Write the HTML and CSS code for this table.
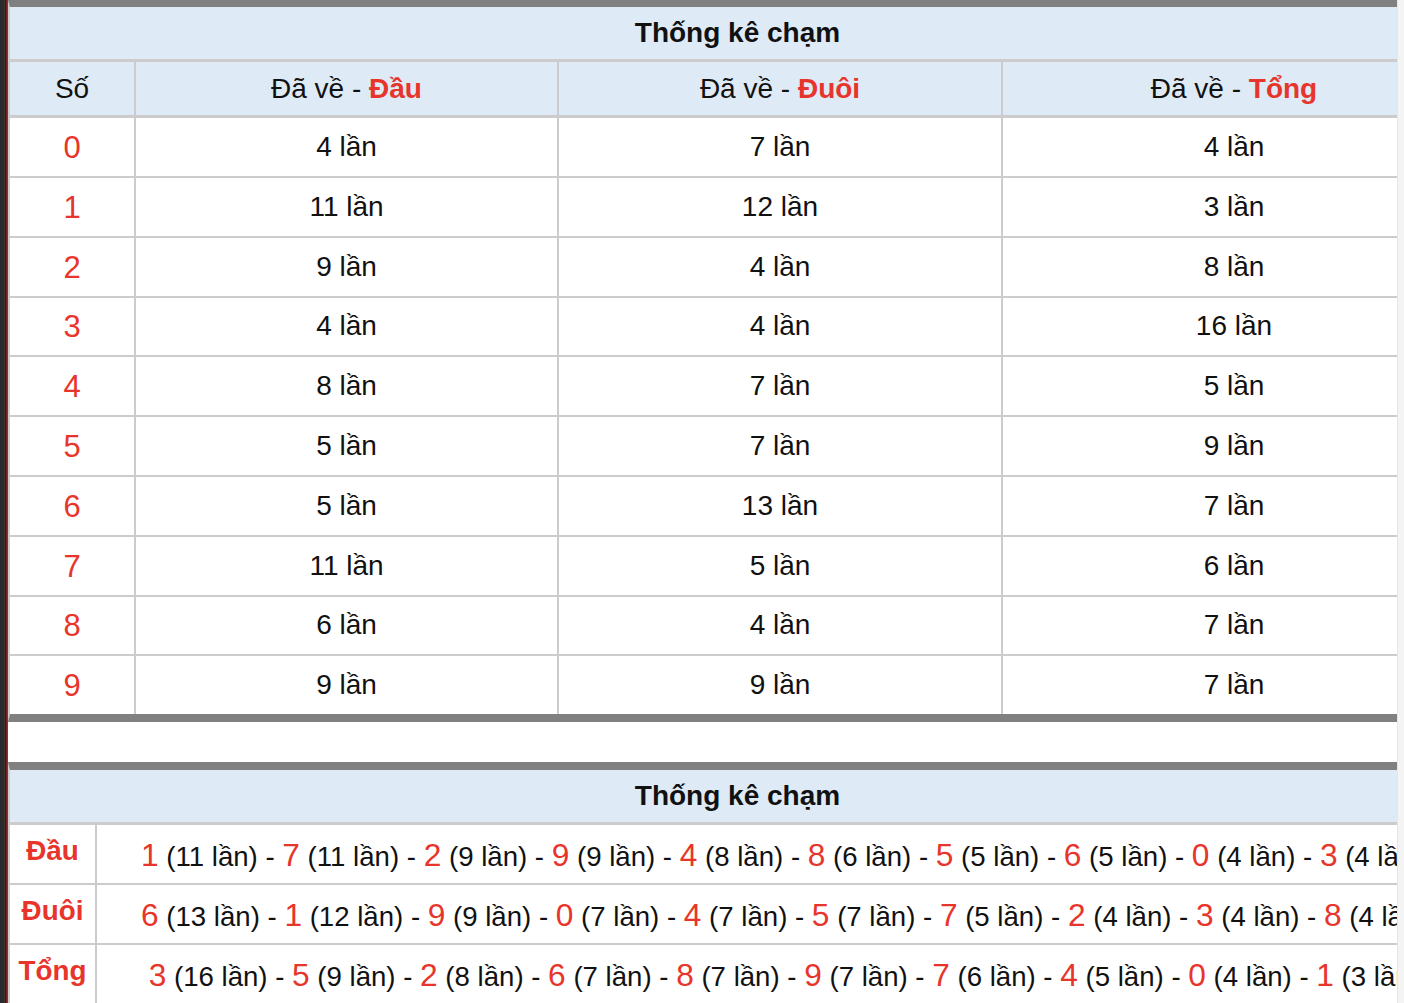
FILE: index.html
```html
<!DOCTYPE html>
<html lang="vi">
<head>
<meta charset="utf-8">
<title>Thống kê chạm</title>
<link rel="stylesheet" href="styles.css">
</head>
<body>
<div class="screen">
  <div class="edge"></div>
  <div class="main">
    <table class="stat t1">
      <colgroup>
        <col class="c1"><col class="c2"><col class="c3"><col class="c4">
      </colgroup>
      <tr class="title-row"><th colspan="4">Thống kê chạm</th></tr>
      <tr class="head-row">
        <th>Số</th>
        <th>Đã về - <b class="red">Đầu</b></th>
        <th>Đã về - <b class="red">Đuôi</b></th>
        <th>Đã về - <b class="red">Tổng</b></th>
      </tr>
      <tr class="first"><td class="num">0</td><td>4 lần</td><td>7 lần</td><td>4 lần</td></tr>
      <tr><td class="num">1</td><td>11 lần</td><td>12 lần</td><td>3 lần</td></tr>
      <tr><td class="num">2</td><td>9 lần</td><td>4 lần</td><td>8 lần</td></tr>
      <tr><td class="num">3</td><td>4 lần</td><td>4 lần</td><td>16 lần</td></tr>
      <tr><td class="num">4</td><td>8 lần</td><td>7 lần</td><td>5 lần</td></tr>
      <tr><td class="num">5</td><td>5 lần</td><td>7 lần</td><td>9 lần</td></tr>
      <tr><td class="num">6</td><td>5 lần</td><td>13 lần</td><td>7 lần</td></tr>
      <tr><td class="num">7</td><td>11 lần</td><td>5 lần</td><td>6 lần</td></tr>
      <tr><td class="num">8</td><td>6 lần</td><td>4 lần</td><td>7 lần</td></tr>
      <tr><td class="num">9</td><td>9 lần</td><td>9 lần</td><td>7 lần</td></tr>
    </table>

    <table class="stat t2">
      <colgroup>
        <col class="s1"><col class="s2">
      </colgroup>
      <tr class="title-row"><th colspan="2">Thống kê chạm</th></tr>
      <tr class="first">
        <th class="label">Đầu</th>
        <td class="line"><span class="n">1</span> (11 lần) - <span class="n">7</span> (11 lần) - <span class="n">2</span> (9 lần) - <span class="n">9</span> (9 lần) - <span class="n">4</span> (8 lần) - <span class="n">8</span> (6 lần) - <span class="n">5</span> (5 lần) - <span class="n">6</span> (5 lần) - <span class="n">0</span> (4 lần) - <span class="n">3</span> (4 lần)</td>
      </tr>
      <tr>
        <th class="label">Đuôi</th>
        <td class="line"><span class="n">6</span> (13 lần) - <span class="n">1</span> (12 lần) - <span class="n">9</span> (9 lần) - <span class="n">0</span> (7 lần) - <span class="n">4</span> (7 lần) - <span class="n">5</span> (7 lần) - <span class="n">7</span> (5 lần) - <span class="n">2</span> (4 lần) - <span class="n">3</span> (4 lần) - <span class="n">8</span> (4 lần)</td>
      </tr>
      <tr>
        <th class="label">Tổng</th>
        <td class="line">&nbsp;<span class="n">3</span> (16 lần) - <span class="n">5</span> (9 lần) - <span class="n">2</span> (8 lần) - <span class="n">6</span> (7 lần) - <span class="n">8</span> (7 lần) - <span class="n">9</span> (7 lần) - <span class="n">7</span> (6 lần) - <span class="n">4</span> (5 lần) - <span class="n">0</span> (4 lần) - <span class="n">1</span> (3 lần)</td>
      </tr>
    </table>
  </div>
  <div class="scroll"></div>
</div>
</body>
</html>
```

FILE: styles.css
```css
html, body {
  margin: 0;
  padding: 0;
  background: #ffffff;
}

body {
  font-family: "Liberation Sans", Arial, sans-serif;
  color: #111111;
}

.screen {
  display: flex;
  height: 1003px;
  overflow: hidden;
}

.edge {
  flex: 0 0 8px;
  background: linear-gradient(to right,
    #2b2b2b 0, #2b2b2b 4px,
    #3a3a3a 4px, #3a3a3a 5px,
    #1e1e1e 5px, #1e1e1e 6px,
    #7c2424 6px, #7c2424 7px,
    #4a4a4a 7px, #4a4a4a 8px);
}

.main {
  flex: 0 0 1389px;
  overflow: hidden;
}

.scroll {
  flex: 0 0 7px;
  box-sizing: border-box;
  background: #f4f4f4;
  border-left: 1px solid #e6e6e6;
}

.stat {
  border-collapse: separate;
  border-spacing: 0;
  box-sizing: border-box;
  width: 1457px;
  table-layout: fixed;
  border-left: 2px solid #cccccc;
  border-bottom: 8px solid #808080;
}

.stat th,
.stat td {
  box-sizing: border-box;
  padding: 0;
  text-align: center;
  vertical-align: middle;
  white-space: nowrap;
}

.t1 {
  border-top: 7px solid #808080;
}

.t2 {
  margin-top: 40px;
  border-top: 8px solid #808080;
}

.c1 { width: 124px; }
.c2 { width: 423px; }
.c3 { width: 444px; }
.c4 { width: 464px; }

.s1 { width: 85px; }
.s2 { width: 1370px; }

.title-row th {
  height: 52px;
  background: #deeaf6;
  font-size: 28px;
  font-weight: bold;
  color: #111111;
}

.head-row th {
  height: 56px;
  border-top: 3px solid #cccccc;
  background: #deeaf6;
  font-size: 28px;
  font-weight: normal;
  color: #111111;
}

.head-row th + th,
.t1 td + td {
  border-left: 2px solid #cccccc;
}

.red {
  color: #e8352b;
  font-weight: bold;
}

.t1 td {
  height: 59.8px;
  border-top: 2px solid #cccccc;
  font-size: 28px;
  color: #111111;
}

.t1 tr.first td {
  height: 61px;
  border-top-width: 3px;
}

.t1 td.num {
  font-size: 31px;
  color: #e8352b;
  padding-top: 2px;
}

.t2 th.label,
.t2 td.line {
  height: 60px;
  border-top: 2px solid #cccccc;
}

.t2 tr.first th.label,
.t2 tr.first td.line {
  height: 61px;
  border-top-width: 3px;
}

.t2 th.label {
  font-size: 27.8px;
  font-weight: bold;
  color: #e8352b;
  padding-bottom: 6px;
}

.t2 td.line {
  border-left: 2px solid #cccccc;
  text-align: left;
  padding-left: 44px;
  padding-top: 3px;
  font-size: 27.6px;
  color: #111111;
  overflow: hidden;
}

.n {
  font-size: 31.7px;
  color: #e8352b;
}
```
